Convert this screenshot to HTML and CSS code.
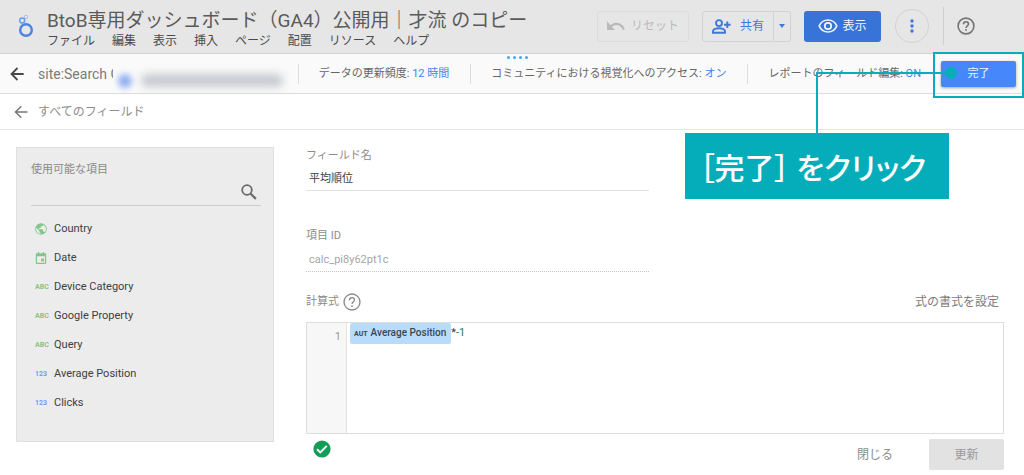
FILE: index.html
```html
<!DOCTYPE html>
<html lang="ja">
<head>
<meta charset="utf-8">
<title>BtoB専用ダッシュボード（GA4）</title>
<link rel="stylesheet" href="styles.css">
</head>
<body>
<header class="header">
  <svg class="logo" viewBox="0 0 16 24" fill="none" stroke="#4a83e0">
    <circle cx="8" cy="16" r="5.8" stroke-width="2.4"/>
    <circle cx="4.2" cy="6.6" r="2.5" stroke-width="1.5" stroke="#6a9cec"/>
    <circle cx="8" cy="2.9" r="1.7" stroke-width="1" stroke="#a3bfee"/>
  </svg>
  <div class="heading">
    <h1 class="title">BtoB専用ダッシュボード（GA4）公開用｜才流 のコピー</h1>
    <nav class="menu">
      <button>ファイル</button><button>編集</button><button>表示</button><button>挿入</button><button>ページ</button><button>配置</button><button>リソース</button><button>ヘルプ</button>
    </nav>
  </div>
  <div class="actions">
    <button class="btn reset" disabled>
      <svg width="18" height="10" viewBox="0 0 18 10"><path d="M0 0v9h8L4.900 6C6.200 4.700 7.700 4 9.500 4c3 0 5.400 2 6.300 5l2-.7C16.700 4.500 13.500 1.700 9.500 1.700c-2.400 0-4.600.9-6.200 2.500z" fill="#b9b9b9"/></svg>
      リセット
    </button>
    <div class="split">
      <button class="btn share">
        <svg width="19" height="15" viewBox="0 0 19 15" fill="none" stroke="#3d78d8" stroke-width="1.900"><circle cx="7" cy="4.100" r="3"/><path d="M1 13.700v-1.500c0-2 3.500-3 6-3s6 1 6 3v1.500zM15.300 2.500v6.600M12 5.800h6.600"/></svg>
        共有
      </button>
      <button class="btn more" aria-label="共有メニュー"><svg width="6" height="4" viewBox="0 0 6 4"><path d="M0 0h6L3 4z" fill="#3d78d8"/></svg></button>
    </div>
    <button class="btn view">
      <svg width="20" height="14" viewBox="0 0 20 14" fill="none" stroke="#f1f5fc" stroke-width="1.700"><path d="M1.200 7C2.800 3.300 6.100 1 10 1s7.200 2.300 8.800 6c-1.600 3.700-4.900 6-8.800 6S2.800 10.700 1.200 7z"/><circle cx="10" cy="7" r="3.200"/></svg>
      表示
    </button>
    <button class="dots" aria-label="その他"><svg width="4" height="16" viewBox="0 0 4 16" fill="#3d78d8"><circle cx="2" cy="3" r="1.700"/><circle cx="2" cy="8" r="1.700"/><circle cx="2" cy="13" r="1.700"/></svg></button>
    <button class="help" aria-label="ヘルプ"><svg width="18" height="18" viewBox="0 0 18 18" fill="none" stroke="#757575" stroke-width="1.600"><circle cx="9" cy="9" r="7.900"/><path d="M6.500 7.200C6.500 5.600 7.600 4.700 9 4.700s2.500.9 2.500 2.300c0 1.700-2.500 1.900-2.500 4M9 12.100v1.700"/></svg></button>
  </div>
</header>

<div class="source">
  <button class="back" aria-label="戻る"><svg width="14" height="14" viewBox="0 0 14 14" fill="none" stroke="#484848" stroke-width="1.800"><path d="M13.700 7H1.500M7.500 1L1.500 7l6 6"/></svg></button>
  <div class="source-name"><span class="source-text">site:Search C</span><span class="masked"><i class="mask-dot"></i><i class="mask-bar"></i></span></div>
  <div class="grip"><i></i><i></i><i></i><i></i></div>
  <div class="setting">データの更新頻度: <a href="#">12 時間</a></div>
  <div class="setting">コミュニティにおける視覚化へのアクセス: <a href="#">オン</a></div>
  <div class="setting">レポートのフィールド編集: <a href="#">ON</a></div>
  <div class="done-wrap">
    <button class="done">完了</button>
    <span class="frame"></span>
    <span class="line"></span>
    <span class="pin"></span>
    <strong class="callout">［完了］ をクリック</strong>
  </div>
</div>

<div class="crumb">
  <button class="back" aria-label="戻る"><svg width="14" height="14" viewBox="0 0 14 14" fill="none" stroke="#777" stroke-width="1.500"><path d="M13.500 7H1.500M7.300 1.200L1.500 7l5.800 5.800"/></svg></button>
  <span>すべてのフィールド</span>
</div>

<main class="main">
  <aside class="panel">
    <label class="panel-label" for="search">使用可能な項目</label>
    <div class="search">
      <input id="search" type="text">
      <svg width="16" height="16" viewBox="0 0 16 16" fill="none" stroke="#6b6b6b"><circle cx="6" cy="6" r="4.800" stroke-width="1.800"/><path d="M9.700 9.700l5.200 5.200" stroke-width="2.200"/></svg>
    </div>
    <ul class="fields">
      <li><svg class="kind" viewBox="0 0 12 12"><circle cx="6" cy="6" r="5.800" fill="#83c58b"/><path d="M1.300 4.800L4.500 8v.7c0 .6.500 1.200 1.100 1.200v1C3 10.700 1 8.600 1 6zM9.700 9.300c-.2-.5-.6-.8-1.100-.8H8V6.800c0-.4-.3-.6-.6-.6H4V5h1.200c.3 0 .6-.2.600-.6V3.300H7c.6 0 1.100-.5 1.100-1.200v-.4C9.900 2.400 11 4.100 11 6c0 1.300-.5 2.500-1.300 3.300z" fill="#ececec"/></svg>Country</li>
      <li><svg class="kind" viewBox="0 0 12 12"><path d="M1.800 1.200H3V0h1.200v1.200h3.600V0H9v1.200h1.200c.6 0 1 .5 1 1.100v8.500c0 .6-.4 1.100-1 1.100H1.800c-.6 0-1-.5-1-1.100V2.300c0-.6.400-1.100 1-1.100zM2 4.200v6.600h8V4.200zM6.200 6.500h2.900v2.900H6.200z" fill="#83c58b" fill-rule="evenodd"/></svg>Date</li>
      <li><span class="kind abc">ABC</span>Device Category</li>
      <li><span class="kind abc">ABC</span>Google Property</li>
      <li><span class="kind abc">ABC</span>Query</li>
      <li><span class="kind num">123</span>Average Position</li>
      <li><span class="kind num">123</span>Clicks</li>
    </ul>
  </aside>

  <form class="form">
    <label class="label" for="name">フィールド名</label>
    <input class="text" id="name" type="text" value="平均順位">
    <label class="label" for="fid">項目 ID</label>
    <input class="text fixed" id="fid" type="text" value="calc_pi8y62pt1c" readonly>
    <div class="formula-head">
      <span class="label" id="formula">計算式</span>
      <svg width="18" height="18" viewBox="0 0 18 18" fill="none" stroke="#888" stroke-width="1.300"><circle cx="9" cy="9" r="8"/><path d="M6.500 7.200C6.500 5.600 7.600 4.700 9 4.700s2.500.9 2.500 2.300c0 1.700-2.500 1.900-2.500 4M9 12.200v1.700"/></svg>
      <button type="button" class="format">式の書式を設定</button>
    </div>
    <div class="editor">
      <div class="gutter">1</div>
      <div class="code" role="textbox" aria-labelledby="formula"><span class="chip"><b>AUT</b>Average Position</span><span>*</span><span class="value">-1</span></div>
    </div>
    <div class="footer">
      <svg class="valid" width="18" height="18" viewBox="0 0 18 18"><circle cx="9" cy="9" r="8.600" fill="#149d58"/><path d="M4 9.300l3.300 3.200 6.500-6.600" fill="none" stroke="#fff" stroke-width="1.900"/></svg>
      <button type="button" class="close">閉じる</button>
      <button type="submit" class="update" disabled>更新</button>
    </div>
  </form>
</main>
</body>
</html>
```
FILE: styles.css
```css
* { box-sizing: border-box; }
body {
  margin: 0;
  background: #fff;
  color: #444;
  font: 11px/16px Roboto, "Noto Sans CJK JP", sans-serif;
}
button {
  margin: 0;
  padding: 0;
  border: 0;
  background: none;
  color: inherit;
  font: inherit;
  white-space: nowrap;
}
svg { display: block; flex: none; }
a { color: #4285f4; text-decoration: none; }

.header {
  display: flex;
  align-items: flex-start;
  height: 54px;
  padding: 0 49px 0 18px;
  background: #e6e6e6;
  border-bottom: 1px solid #d3d3d3;
}
.logo { width: 16px; height: 24px; margin: 14px 13px 0 0; }
.heading { flex: 1; min-width: 0; padding-top: 9px; }
.title {
  margin: 0;
  color: #5a5a5a;
  font-size: 19px;
  font-weight: 400;
  line-height: 24px;
  white-space: nowrap;
}
.menu { display: flex; gap: 17px; font-size: 12px; color: #4a4a4a; }

.actions { display: flex; align-items: center; height: 52px; font-size: 12px; }
.btn {
  display: flex;
  align-items: center;
  justify-content: center;
  height: 31px;
  border: 1px solid #d2d2d2;
  border-radius: 3px;
}
.reset { width: 92px; gap: 6px; color: #bababa; border-color: #dcdcdc; }
.split { display: flex; margin-left: 13px; color: #3d78d8; }
.share { width: 72px; gap: 9px; border-radius: 3px 0 0 3px; }
.more { width: 17px; border-left: 0; border-radius: 0 3px 3px 0; }
.view {
  width: 77px;
  gap: 4px;
  margin-left: 13px;
  border: 0;
  background: #3874d8;
  color: #f1f5fc;
}
.dots {
  display: grid;
  place-items: center;
  width: 34px;
  height: 34px;
  margin: 0 14px;
  border: 1px solid #d2d2d2;
  border-radius: 50%;
}
.help {
  display: flex;
  align-items: center;
  height: 38px;
  padding-left: 13px;
  border-left: 1px solid #cfcfcf;
}

.source {
  position: relative;
  display: flex;
  align-items: center;
  height: 40px;
  padding: 0 8px 0 10px;
  background: #fafafa;
  border-bottom: 1px solid #dcdcdc;
  color: #666;
}
.source-name {
  display: flex;
  align-items: center;
  flex: 1;
  margin-left: 14px;
  min-width: 0;
  color: #7b7b7b;
}
.source-text { font-size: 14px; white-space: nowrap; }
.masked {
  display: flex;
  align-items: center;
  gap: 9px;
  margin-left: -7px;
  padding: 14px 0 0 5px;
  background: #fafafa;
}
.mask-dot { width: 14px; height: 14px; border-radius: 50%; background: #8faef2; filter: blur(3px); }
.mask-bar { width: 142px; height: 13px; border-radius: 6px; background: #c6c9cf; filter: blur(4px); }
.grip { position: absolute; top: 2px; left: 0; right: 0; display: flex; justify-content: center; gap: 3px; margin-left: 10px; }
.grip i { width: 3px; height: 3px; border-radius: 50%; background: #42a5f5; }
.setting {
  height: 20px;
  padding: 0 20px;
  border-left: 1px solid #dedede;
  line-height: 20px;
  white-space: nowrap;
}
.setting:not(:nth-last-child(2)) { padding-right: 21px; }

.done-wrap { position: relative; display: flex; }
.done {
  width: 75px;
  height: 26px;
  border-radius: 2px;
  background: #4688fb;
  box-shadow: 0 1px 3px rgba(0, 0, 0, .35);
  color: #eef4ff;
}
.frame { position: absolute; inset: -9px -8px -11px -8px; border: 2px solid #08adb9; }
.line {
  position: absolute;
  top: 11px;
  right: 65px;
  width: 135px;
  height: 62px;
  border: solid #08adb9;
  border-width: 2px 0 0 2px;
}
.pin {
  position: absolute;
  top: 6px;
  left: 4px;
  width: 12px;
  height: 12px;
  border-radius: 50%;
  background: #08adb9;
}
.callout {
  position: absolute;
  z-index: 1;
  top: 72px;
  right: 67px;
  padding: 12px 23px 12px 15px;
  background: #05adbb;
  color: #fff;
  font: 500 30px/42px "Noto Sans CJK JP", sans-serif;
  font-feature-settings: "palt";
  white-space: nowrap;
}

.crumb {
  display: flex;
  align-items: center;
  gap: 10px;
  height: 36px;
  padding: 0 14px;
  border-bottom: 1px solid #e6e6e6;
  color: #8c8c8c;
  font-size: 12px;
}

.main { display: flex; align-items: flex-start; gap: 32px; padding: 17px 20px 5px 16px; }
.panel {
  flex: 0 0 258px;
  padding: 14px 12px 24px 14px;
  border: 1px solid #e0e0e0;
  background: #ececec;
}
.panel-label { display: block; color: #8a8a8a; }
.search {
  display: flex;
  align-items: center;
  height: 28px;
  padding-right: 4px;
  border-bottom: 1px solid #cdcdcd;
}
.search input { flex: 1; min-width: 0; border: 0; outline: 0; background: none; }
.fields { margin: 0; padding: 8px 0 0 4px; list-style: none; color: #404040; }
.fields li { display: flex; align-items: center; gap: 7px; height: 29px; }
.kind { width: 12px; height: 12px; font-size: 7px; font-weight: 700; line-height: 13px; }
.abc { color: #83c58b; }
.num { color: #6f9df5; }

.form { flex: 1; min-width: 0; padding-top: 1px; }
.label { display: block; color: #8c8c8c; }
.text {
  display: block;
  width: 343px;
  height: 27px;
  margin-bottom: 37px;
  padding: 3px;
  border: 0;
  border-bottom: 1px solid #e2e2e2;
  outline: 0;
  background: none;
  color: #404040;
  font: inherit;
}
.fixed {
  height: 28px;
  margin-bottom: 20px;
  padding-top: 7px;
  border-bottom: 1px dotted #c4c4c4;
  color: #a6a6a6;
}
.formula-head { display: flex; align-items: center; gap: 4px; height: 20px; }
.format { margin: 0 5px 0 auto; color: #7c7c7c; font-size: 12px; }
.editor {
  display: flex;
  min-height: 112px;
  margin-top: 10px;
  border: 1px solid #dedede;
}
.gutter {
  width: 40px;
  padding: 6px 5px 0 0;
  border-right: 1px solid #e2e2e2;
  background: #f7f7f7;
  color: #999;
  text-align: right;
}
.code { display: flex; align-items: flex-start; padding-left: 3px; line-height: 20px; color: #333; }
.chip {
  padding: 0 5px 0 4px;
  border-radius: 2px;
  background: #badcfb;
  color: #37474f;
  font-size: 10px;
  font-weight: 500;
}
.chip b { margin-right: 3px; font-size: 7px; }
.value { color: #1b7f55; }
.footer { display: flex; align-items: center; margin-top: 5px; color: #8c8c8c; font-size: 12px; }
.valid { margin: 0 auto 12px 7px; }
.update {
  width: 75px;
  height: 31px;
  margin-left: 36px;
  border-radius: 2px;
  background: #e2e2e2;
  color: #999;
}
```
